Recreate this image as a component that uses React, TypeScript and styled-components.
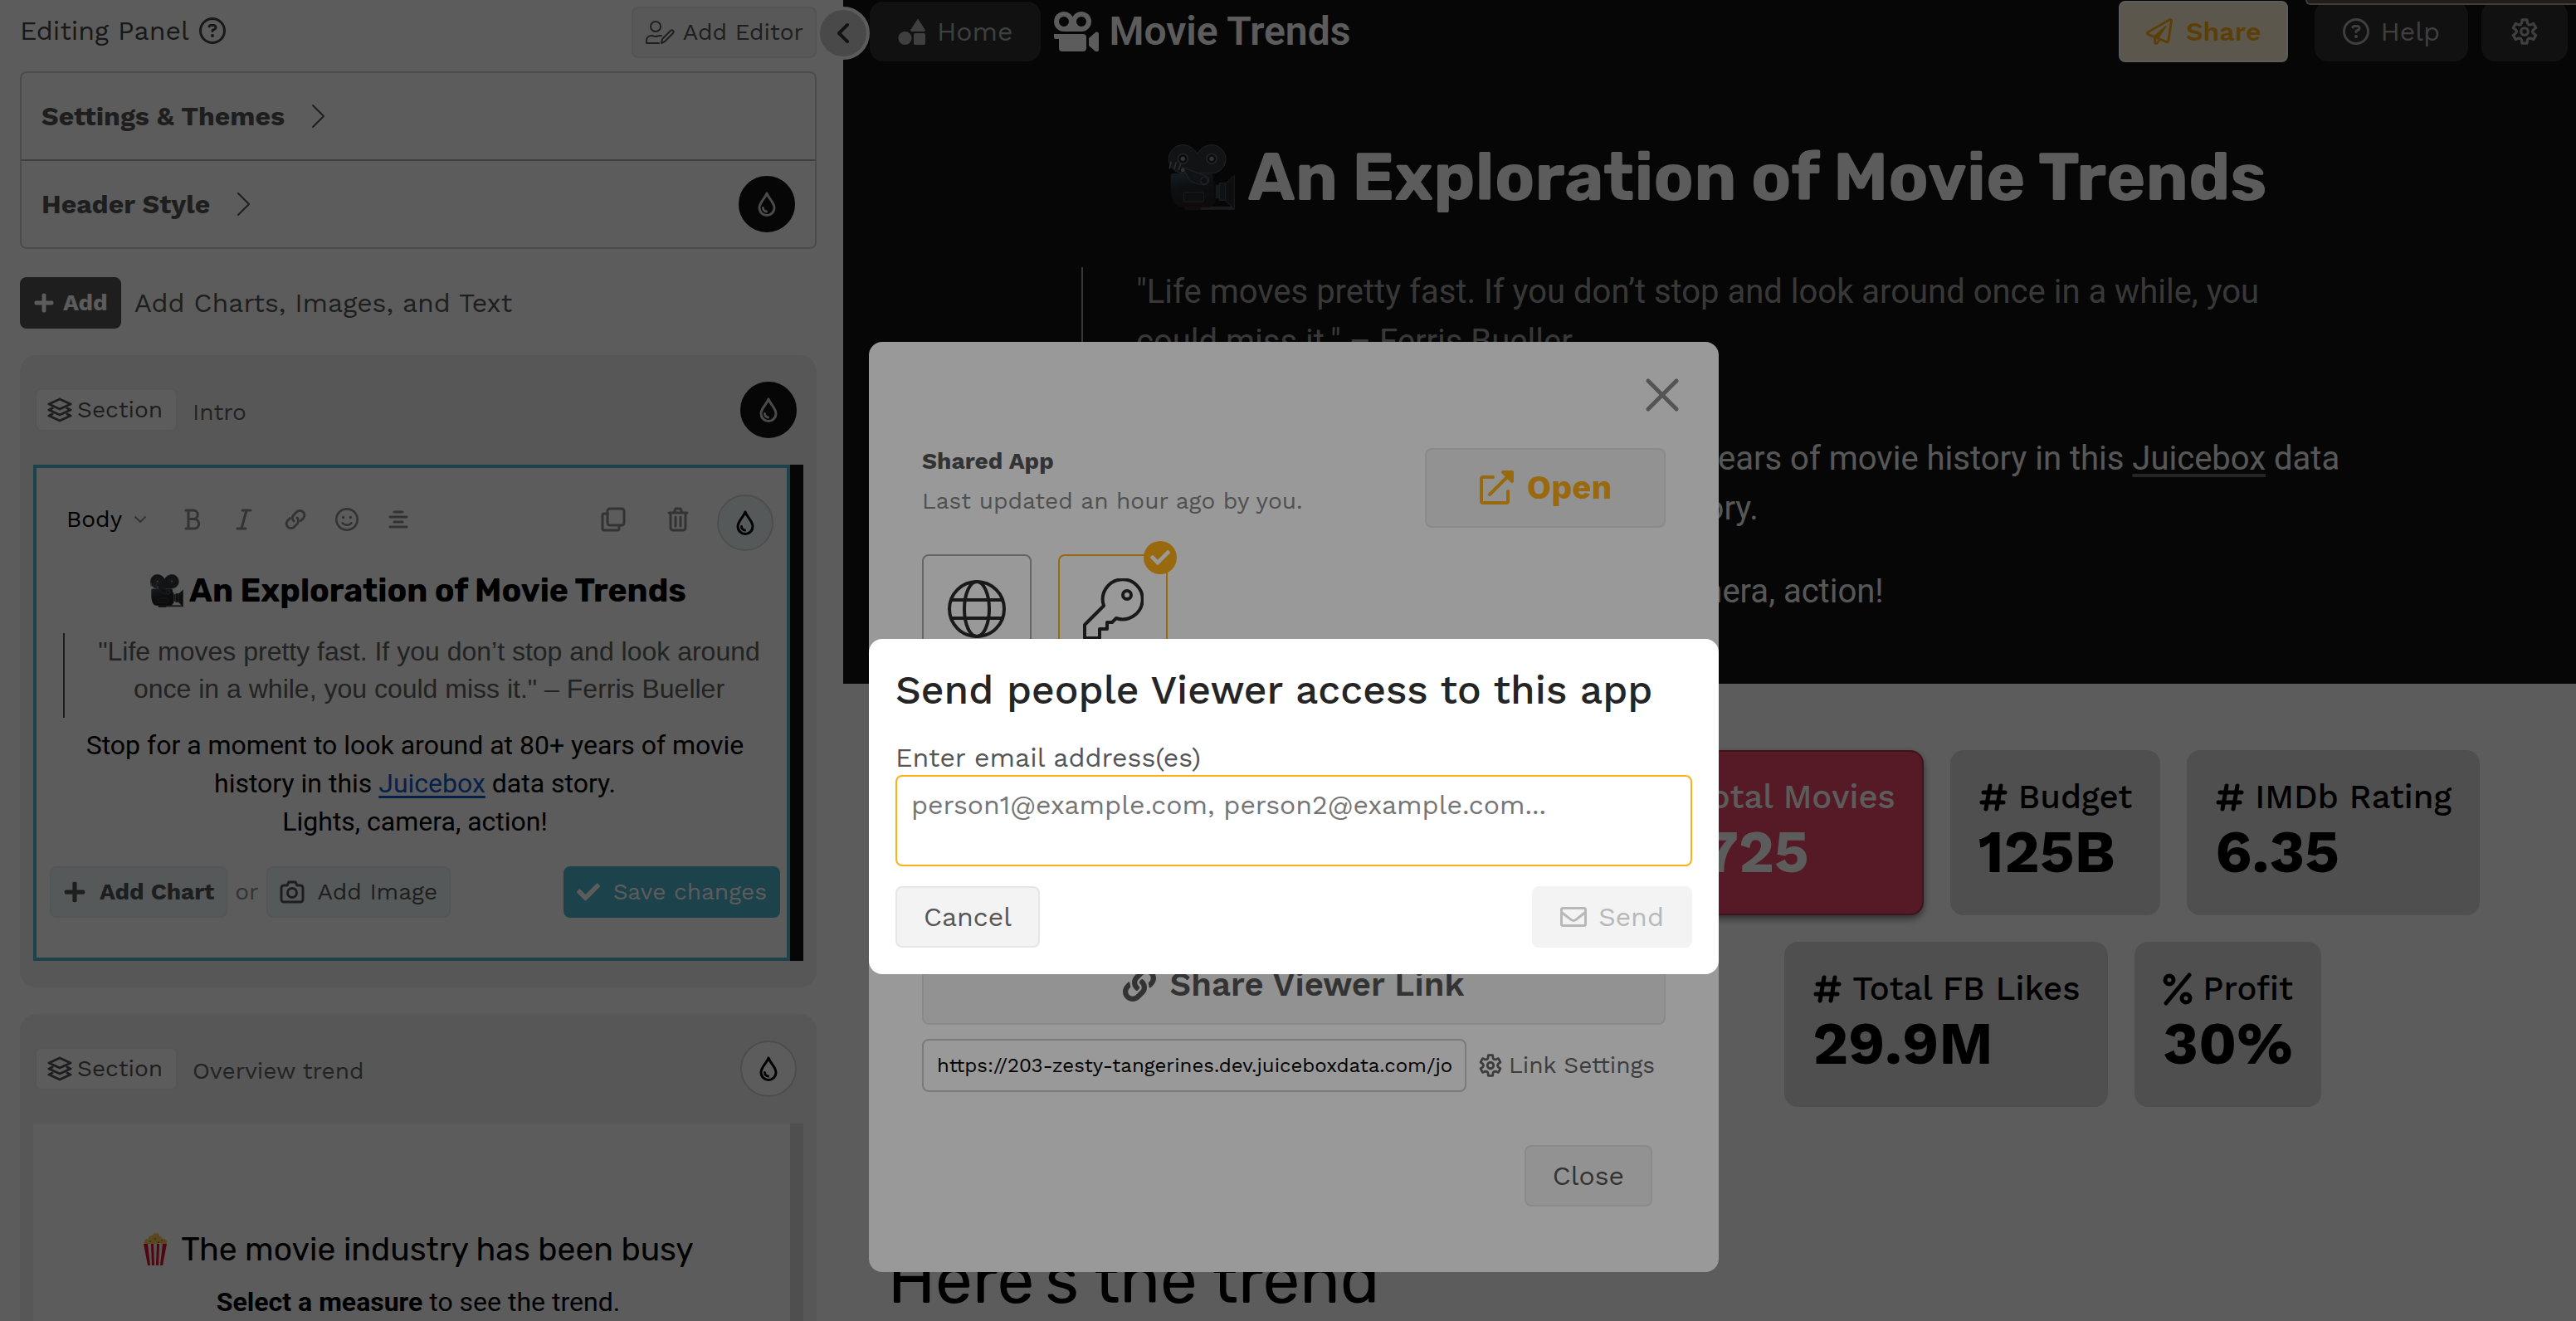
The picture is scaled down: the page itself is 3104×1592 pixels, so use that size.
import React from "react";
import styled, { createGlobalStyle, css } from "styled-components";
import { FaCheck, FaLink, FaPlus, FaRegEnvelope, FaRegPaperPlane } from "react-icons/fa";
import { FaRegCircleQuestion, FaRegFaceSmile } from "react-icons/fa6";

const WORK = '"Work Sans", Inter, sans-serif';
const RUBIK = 'Rubik, Inter, sans-serif';
const ROBOTO = 'Roboto, sans-serif';
const AMBER = "#ffaf17";
const TEAL = "#4eb7d3";

const Global = createGlobalStyle`
  *, *::before, *::after { box-sizing: border-box; }
  body { margin: 0; overflow: hidden; font-family: ${WORK}; font-size: 32px; line-height: 40px; color: #555; background: #fff; }
  h1, h2, h3, p, blockquote { margin: 0; font-weight: inherit; font-size: inherit; }
  button, input, textarea, select { font: inherit; color: inherit; margin: 0; }
  button { cursor: pointer; }
  svg { display: block; flex: none; }
`;

/* ---------- icons ---------- */

type IconProps = { size?: number };
const Line = styled.svg<{ $w?: number }>`
  fill: none; stroke: currentColor; stroke-width: ${(p) => p.$w ?? 2};
  stroke-linecap: round; stroke-linejoin: round;
`;

const Drop = () => (
  <Line width={22} height={30} viewBox="0 0 22 30" $w={3}>
    <path d="M11 2C9 8 2 13 2 19.500a9 9 0 0 0 18 0C20 13 13 8 11 2Z" />
    <path d="M6.500 19.500a4.500 4.500 0 0 0 4 4.500" />
  </Line>
);
const ChevronRight = () => <Line width={18} height={30} viewBox="0 0 18 30" $w={2}><path d="M2 2l13 13L2 28" /></Line>;
const ChevronLeft = () => <Line width={18} height={26} viewBox="0 0 18 26" $w={4}><path d="M14 3L4 13l10 10" /></Line>;
const ChevronDown = () => <Line width={16} height={10} viewBox="0 0 16 10"><path d="M2 2l6 6 6-6" /></Line>;
const UserPen = () => (
  <Line width={36} height={30} viewBox="0 0 36 30" $w={2}>
    <circle cx="13" cy="8" r="6" />
    <path d="M17 28H2v-3c0-4 3-6 6-6 3 0 3 1 5 1s3-1 5-1h2" />
    <path d="M20 28l1-5 10-10c2-2 5 1 3 3L24 26z" />
  </Line>
);
const Layers = () => (
  <Line width={30} height={30} viewBox="0 0 30 30" $w={3}>
    <path d="M15 2l13 6-13 6L2 8z" />
    <path d="M6 13l-4 2 13 6 13-6-4-2" />
    <path d="M6 20l-4 2 13 6 13-6-4-2" />
  </Line>
);
const Bold = () => <Line width={20} height={26} viewBox="0 0 20 26" $w={3}><path d="M2 2h9a5 5 0 0 1 0 10.500H5M2 24h10a5.700 5.700 0 0 0 0-11.500M5 2v22" /></Line>;
const Italic = () => <Line width={20} height={26} viewBox="0 0 20 26" $w={3}><path d="M8 2h10M2 24h10M13 2L7 24" /></Line>;
const Chain = () => (
  <Line width={28} height={28} viewBox="0 0 28 28" $w={3}>
    <path d="M12 16a5.500 5.500 0 0 1 0-7.500l4-4a5.500 5.500 0 0 1 7.700 7.700l-3.200 3.300" />
    <path d="M16 12a5.500 5.500 0 0 1 0 7.500l-4 4a5.500 5.500 0 0 1-7.700-7.700l3.200-3.300" />
  </Line>
);
const AlignMid = () => <Line width={24} height={26} viewBox="0 0 24 26" $w={3}><path d="M7 4h10M2 10h20M7 16h10M2 22h20" /></Line>;
const Copy = () => (
  <Line width={30} height={30} viewBox="0 0 30 30" $w={3}>
    <rect x="8" y="2" width="20" height="20" rx="3" />
    <path d="M8 8H4a2 2 0 0 0-2 2v16a2 2 0 0 0 2 2h16a2 2 0 0 0 2-2v-4" />
  </Line>
);
const Trash = () => (
  <Line width={26} height={30} viewBox="0 0 26 30" $w={3}>
    <path d="M2 7h22M8 7l2-5h6l2 5M4 7v18a3 3 0 0 0 3 3h12a3 3 0 0 0 3-3V7M10 12v11M16 12v11" />
  </Line>
);
const Camera = () => (
  <Line width={30} height={28} viewBox="0 0 30 28" $w={3}>
    <path d="M2 9a3 3 0 0 1 3-3h4l2-4h8l2 4h4a3 3 0 0 1 3 3v14a3 3 0 0 1-3 3H5a3 3 0 0 1-3-3z" />
    <circle cx="15" cy="15" r="5.500" />
  </Line>
);
const Shapes = () => (
  <svg width={34} height={34} viewBox="0 0 34 34" fill="currentColor">
    <path d="M24 1.500l8.500 13a1.500 1.500 0 0 1-1 2.500H16.500a1.500 1.500 0 0 1-1-2.500z" />
    <circle cx="8.500" cy="25" r="8" /><rect x="19" y="19" width="14" height="14" rx="2" />
  </svg>
);
const MovieIcon = () => (
  <svg width={54} height={48} viewBox="0 0 54 48" fill="currentColor">
    <path fillRule="evenodd" d="M12 0c5 0 9 3 10.500 6.500C24 3 28 0 33 0a12 12 0 0 1 0 24H12A12 12 0 0 1 12 0zm0 6a6 6 0 1 0 0 12 6 6 0 0 0 0-12zm21 0a6 6 0 1 0 0 12 6 6 0 0 0 0-12z" />
    <path d="M0 27h35a4 4 0 0 1 4 4v13a4 4 0 0 1-4 4H10a4 4 0 0 1-4-4V33H2a2 2 0 0 1-2-2z" />
    <path d="M42 32l8-7c2-1 4 0 4 2v19c0 2-2 3-4 2l-8-7z" />
  </svg>
);
const Hash = () => <Line width={36} height={36} viewBox="0 0 36 36" $w={5}><path d="M14 4L9 32M27 4l-5 28M6 12h26M4 24h26" /></Line>;
const Percent = () => (
  <Line width={36} height={40} viewBox="0 0 36 40" $w={5}>
    <path d="M32 3L4 37" /><circle cx="8" cy="9" r="5" /><circle cx="28" cy="31" r="5" />
  </Line>
);

/* Outline of a six-toothed cog inside a 30-unit box. */
const gearPath = (() => {
  const tooth = [[-30, 9], [-19, 10], [-12, 13.500], [12, 13.500], [19, 10]];
  const points: string[] = [];
  for (let i = 0; i < 6; i++) {
    tooth.forEach(([deg, r]) => {
      const a = ((i * 60 + deg - 90) * Math.PI) / 180;
      points.push(`${(15 + r * Math.cos(a)).toFixed(2)} ${(15 + r * Math.sin(a)).toFixed(2)}`);
    });
  }
  return `M${points.join("L")}Z`;
})();
const Gear = ({ size = 32 }: IconProps) => (
  <Line width={size} height={size} viewBox="0 0 30 30" $w={3}>
    <path d={gearPath} /><circle cx="15" cy="15" r="4" />
  </Line>
);
const CloseX = () => <Line width={40} height={40} viewBox="0 0 40 40" $w={5}><path d="M3 3l34 34M37 3L3 37" /></Line>;
const External = () => (
  <Line width={42} height={42} viewBox="0 0 42 42" $w={4}>
    <path d="M17 8H5a2 2 0 0 0-2 2v27a2 2 0 0 0 2 2h28a2 2 0 0 0 2-2V25M13 29L36 6" />
    <path d="M29 2h11v11z" fill="currentColor" />
  </Line>
);
const Globe = () => (
  <Line width={72} height={72} viewBox="0 0 72 72" $w={4}>
    <circle cx="36" cy="36" r="33" /><ellipse cx="36" cy="36" rx="15" ry="33" /><path d="M6 25h60M6 47h60" />
  </Line>
);
const Key = () => (
  <Line width={74} height={74} viewBox="0 0 74 74" $w={4}>
    <path d="M26 33A24 24 0 1 1 41 48l-5 5h-6v8h-9v11H3V56z" />
    <circle cx="54" cy="20" r="5" />
  </Line>
);

const CameraEmoji = ({ size = 80 }: IconProps) => (
  <svg width={size} height={size} viewBox="0 0 240 240" role="img" aria-label="movie camera">
    <defs>
      <linearGradient id="body" x1="0" y1="0" x2="0.300" y2="1">
        <stop offset="0" stopColor="#3c4f5e" /><stop offset="0.500" stopColor="#232a30" /><stop offset="1" stopColor="#2a1f1e" />
      </linearGradient>
    </defs>
    <path d="M52 2c24 0 40 14 52 32C116 16 132 2 156 2a51 51 0 0 1 0 102H52A51 51 0 0 1 52 2z" fill="#30363c" stroke="#59636c" strokeWidth="3" />
    <circle cx="52" cy="52" r="18" fill="#20252a" stroke="#626c76" strokeWidth="4" /><circle cx="52" cy="52" r="8" fill="#8a929a" />
    <circle cx="156" cy="52" r="18" fill="#20252a" stroke="#626c76" strokeWidth="4" /><circle cx="156" cy="52" r="8" fill="#8a929a" />
    <path d="M58 224h180v12H62z" fill="#4d4850" />
    <path d="M8 112c0-6 8-7 20-7h124c6 0 10 6 10 12v96c0 8-6 14-14 14H46c-18 0-38-20-38-70z" fill="url(#body)" />
    <path d="M54 226h66l-6 12H62z" fill="#2c2628" />
    <rect x="55" y="174" width="73" height="33" rx="5" fill="#25272a" stroke="#4c5156" strokeWidth="3" />
    <path d="M162 132h8v80h-8z" fill="#1b1e21" /><path d="M170 146h14v50h-14z" fill="#3d4349" />
    <path d="M184 140h22v62h-22z" fill="#2c3238" stroke="#4a525a" strokeWidth="3" />
    <path d="M206 142l32-30v122l-32-30z" fill="#25292d" stroke="#4a4f54" strokeWidth="3" />
    <path d="M48 82l90 34a16 16 0 0 1-8 30c-6 0-60-4-60-30z" fill="#2e343a" stroke="#5a636b" strokeWidth="3" />
    <path d="M4 88l6-26M20 90l8-26M36 92l8-22" stroke="#79838c" strokeWidth="5" />
    <circle cx="52" cy="93" r="7" fill="#8a929a" /><circle cx="129" cy="131" r="13" fill="#272c31" stroke="#5c656d" strokeWidth="4" />
  </svg>
);
const Popcorn = () => (
  <svg width={30} height={40} viewBox="0 0 30 40" role="img" aria-label="popcorn">
    <g fill="#f5c453"><circle cx="6" cy="11" r="4" /><circle cx="11" cy="7" r="4" /><circle cx="16" cy="4" r="4" /><circle cx="20" cy="8" r="4" /><circle cx="25" cy="11" r="4" /><circle cx="15" cy="11" r="5" /></g>
    <g fill="#b9772c"><circle cx="9" cy="10" r="1" /><circle cx="15" cy="7" r="1" /><circle cx="19" cy="11" r="1" /><circle cx="23" cy="9" r="1" /></g>
    <path d="M1 13h28l-5 26H6z" fill="#f4f1f1" />
    <path d="M1 13h5l3 26H6zM10 13h3l1 26h-3zM17 13h3l-1 26h-3zM24 13h5l-5 26h-3z" fill="#e0132b" />
  </svg>
);

/* ---------- shared controls ---------- */

const Button = styled.button<{ $tall?: boolean; $bold?: boolean; $kind?: "plain" | "dark" | "teal" | "tint" }>`
  display: inline-flex; align-items: center; justify-content: center; gap: 10px;
  height: ${(p) => (p.$tall ? 74 : 62)}px; padding: 0 ${(p) => (p.$tall ? 32 : 14)}px;
  font-size: ${(p) => (p.$tall ? 32 : 28)}px; line-height: 40px; font-weight: ${(p) => (p.$bold ? 700 : 400)};
  white-space: nowrap; border-radius: 8px; border: 2px solid #e6e6e6; background: #f3f3f3; color: #555;
  ${(p) => p.$kind === "dark" && css`background: #555; border-color: #555; color: #fff;`}
  ${(p) => p.$kind === "teal" && css`background: ${TEAL}; border-color: ${TEAL}; color: #fff; gap: 16px;`}
  ${(p) => p.$kind === "tint" && css`background: #ecf6f7; border-color: #e6eeee; gap: 16px;`}
  &:disabled { background: #f3f3f3; border-color: #f3f3f3; color: #b8b8b8; gap: 14px; }
`;
const RoundButton = styled.button<{ $tone: "dark" | "light" | "tint" }>`
  display: grid; place-items: center; flex: none; width: 68px; height: 68px; padding: 0; border-radius: 50%;
  ${(p) => p.$tone === "dark" && css`background: #111; border: 2px solid #111; color: #ccc;`}
  ${(p) => p.$tone === "light" && css`background: #fff; border: 2px solid #d3d3d3; color: #000;`}
  ${(p) => p.$tone === "tint" && css`background: #ebf7f9; border: 2px solid #d3d9d9; color: #000;`}
`;

/* ---------- editing panel ---------- */

const Page = styled.div`display: flex; height: 100vh; overflow: hidden;`;
const Panel = styled.aside`position: relative; flex: none; width: 1016px; padding: 8px 32px 0 24px; background: #fff;`;
const PanelHead = styled.header`
  display: flex; align-items: center; justify-content: space-between; height: 62px; margin-bottom: 16px;
`;
const PanelTitle = styled.h2`display: flex; align-items: center; gap: 12px; padding-bottom: 4px; color: #444;`;
const Collapse = styled.button`
  position: absolute; z-index: 1; top: 8px; right: -32px; width: 64px; height: 64px; padding: 0;
  display: grid; place-items: center; border-radius: 50%; border: 4px solid #fff; background: #cbcbcb; color: #333;
`;
const Accordion = styled.div`border: 2px solid #d0d0d0; border-radius: 8px; margin-bottom: 34px;`;
const AccordionRow = styled.div`
  display: flex; align-items: center; justify-content: space-between; height: 104px; padding: 0 24px;
  & + & { border-top: 2px solid #b0b0b0; height: 106px; }
`;
const AccordionToggle = styled.button`
  display: flex; align-items: center; gap: 32px; padding: 0; border: 0; background: none; font-weight: 700;
`;
const AddRow = styled.div`display: flex; align-items: center; gap: 16px; margin-bottom: 32px;`;
const Card = styled.section`padding: 0 16px 32px; margin-bottom: 32px; border-radius: 20px; background: #f0f0f0;`;
const CardHead = styled.header`
  display: flex; align-items: center; gap: 18px; height: 132px; padding: 0 8px 0 2px; font-size: 28px;
`;
const Pill = styled.button`
  display: flex; align-items: center; gap: 6px; height: 52px; padding: 0 16px 0 13px;
  border: 2px solid #ececec; border-radius: 8px; background: #fff;
`;
const CardName = styled.span`flex: 1; padding-top: 6px; color: #616161;`;
const Stage = styled.div<{ $bar: string }>`border-right: 16px solid ${(p) => p.$bar};`;
const Block = styled.div<{ $active?: boolean }>`
  min-height: 300px; padding: ${(p) => (p.$active ? "32px 8px 48px 16px" : "128px 8px 80px 24px")};
  border: ${(p) => (p.$active ? `4px solid ${TEAL}` : "0")}; background: ${(p) => (p.$active ? "#fdfffb" : "#fff")};
  color: #000; font-family: ${ROBOTO}; text-align: center;
`;
const Toolbar = styled.div`
  display: flex; align-items: center; height: 68px; margin-bottom: 24px; padding: 0 8px 0 20px; color: #8c8f8c;
  font-family: ${WORK};
`;
const ToolGroup = styled.div<{ $gap: number }>`display: flex; align-items: center; gap: ${(p) => p.$gap}px; padding: 0 32px 8px 0;`;
const Tool = styled.button`display: grid; place-items: center; width: 30px; height: 30px; padding: 0; border: 0; background: none;`;
const StyleSelect = styled.label`display: flex; align-items: center; gap: 13px; margin-right: 8px;`;
const Select = styled.select`
  appearance: none; border: 0; padding: 0; width: 68px; height: 40px; background: none; font-size: 28px; line-height: 40px; color: #000;
`;
const Fill = styled.span`flex: 1;`;
const BlockTitle = styled.h3<{ $bold?: boolean }>`
  display: flex; align-items: center; justify-content: center; gap: ${(p) => (p.$bold ? 7 : 16)}px;
  padding-left: ${(p) => (p.$bold ? 8 : 0)}px;
  font-family: ${RUBIK}; font-size: 39px; line-height: 48px; font-weight: ${(p) => (p.$bold ? 700 : 400)};
`;
const SmallQuote = styled.blockquote`
  margin: 27px 0 10px 16px; padding: 0 0 12px 16px; border-left: 2px solid #555;
  font-family: "Liberation Sans", Arial, sans-serif; line-height: 45px; color: #606360;
`;
const Body = styled.p<{ $top?: number }>`margin-top: ${(p) => p.$top ?? 0}px; line-height: 46px;`;
const BlueLink = styled.a`color: #0a5bd0; text-decoration-thickness: 3px; text-underline-offset: 4px;`;
const BlockFoot = styled.div`
  display: flex; align-items: center; gap: 9px; margin-top: 31px; font-family: ${WORK}; font-size: 28px; color: #8c8f8c;
`;

/* ---------- app preview ---------- */

const Main = styled.main`flex: 1; min-width: 0; background: #fff;`;
const Dark = styled.div`background: #111; color: #f0f0f0; font-family: ${ROBOTO};`;
const TopBar = styled.header`
  position: relative; display: flex; align-items: center; height: 76px; padding: 0 10px 0 32px; font-family: ${WORK};
`;
const NavButton = styled.button<{ $pad: number }>`
  display: flex; align-items: center; gap: 13px; height: 72px; padding: 0 ${(p) => p.$pad}px;
  border: 0; border-radius: 16px; background: #2f2f2f; color: #b0b0b0;
`;
const AppName = styled.h1`
  display: flex; align-items: center; flex: 1; gap: 12px; margin-left: 16px;
  font-family: ${ROBOTO}; font-size: 48px; line-height: 56px; font-weight: 600; color: #fff;
`;
const ShareButton = styled.button`
  display: flex; align-items: center; gap: 16px; height: 74px; padding: 0 31px; margin-right: 32px;
  border: 2px solid #fff; border-radius: 8px; background: #fff0d4; color: ${AMBER}; font-weight: 600;
`;
const TopActions = styled.div`display: flex; gap: 16px;`;
const Peek = styled.div`
  position: absolute; top: 0; right: 0; width: 326px; height: 6px;
  background: #5e5048; border: solid #b8ab9f; border-width: 0 0 2px 2px; border-bottom-left-radius: 16px;
`;
const HeroWrap = styled.div`padding-left: 20px;`;
const Hero = styled.div`max-width: 1534px; margin: 0 auto; padding: 90px 0 81px; font-size: 40px; line-height: 60px; text-align: center;`;
const HeroTitle = styled.h2`
  display: flex; align-items: center; justify-content: center; gap: 15px; height: 96px; margin-bottom: 60px;
  font-family: ${RUBIK}; font-size: 80px; line-height: 96px; font-weight: 700; color: #fff;
`;
const HeroQuote = styled.blockquote`margin-bottom: 81px; padding: 0 64px; border-left: 2px solid #9b9b9b; color: #9b9b9b; text-align: left;`;
const HeroText = styled.p`& + & { margin-top: 40px; }`;
const HeroLink = styled.a`color: inherit; text-decoration-color: #666; text-decoration-thickness: 4px; text-underline-offset: 5px;`;
const Kpis = styled.div`display: grid; gap: 32px; padding-top: 80px;`;
const KpiRow = styled.div<{ $end: number }>`display: flex; justify-content: flex-end; gap: 32px; padding-right: ${(p) => p.$end}px;`;
const Kpi = styled.article<{ $hot?: boolean }>`
  height: 199px; padding: 28px 32px; border: 2px solid #dbdbdb; border-radius: 16px; background: #dbdbdb; color: #000;
  ${(p) => p.$hot && css`background: #ec486a; border-color: #b03650; color: #fff; box-shadow: 0 4px 8px rgba(0, 0, 0, 0.5);`}
`;
const KpiLabel = styled.h3`display: flex; align-items: center; gap: 12px; font-size: 40px; line-height: 54px; font-weight: 500; white-space: nowrap;`;
const KpiValue = styled.p`font-size: 72px; line-height: 76px; font-weight: 700;`;
const TrendTitle = styled.h2`padding: 161px 0 0 54px; font-family: ${RUBIK}; font-size: 80px; line-height: 96px; color: #000;`;

/* ---------- dialogs ---------- */

const Backdrop = styled.div`
  position: fixed; inset: 0; z-index: 2; display: grid; place-items: center; padding: 352px 0 0 14px; background: rgba(0, 0, 0, 0.4);
`;
const Dialog = styled.div<{ $pad: string }>`width: 1024px; padding: ${(p) => p.$pad}; border-radius: 16px; background: #fff;`;
const CloseRow = styled.div`display: flex; justify-content: flex-end; margin-right: -16px;`;
const IconButton = styled.button`padding: 0; border: 0; background: none; color: #8d8d8d;`;
const SharedRow = styled.div`display: flex; justify-content: space-between; margin: 44px 0 32px; font-size: 28px; line-height: 48px;`;
const SharedText = styled.div`margin-top: -8px;`;
const SharedName = styled.h2`font-weight: 700;`;
const Updated = styled.p`color: #868686;`;
const OpenButton = styled.button`
  display: flex; align-items: center; justify-content: center; gap: 16px; width: 290px; height: 96px;
  border: 2px solid #e6e6e6; border-radius: 8px; background: #f3f3f3; color: ${AMBER}; font-size: 40px; font-weight: 700;
`;
const Options = styled.div`display: flex; gap: 32px; margin-bottom: 339px;`;
const Option = styled.button<{ $on?: boolean }>`
  position: relative; display: grid; place-items: center; width: 132px; height: 132px; padding: 0;
  border: 2px solid ${(p) => (p.$on ? AMBER : "#aaa")}; border-radius: 8px; background: #fff; color: #2a2a2a;
`;
const Tick = styled.span`
  position: absolute; top: -18px; right: -13px; display: grid; place-items: center; width: 40px; height: 40px;
  border-radius: 50%; background: ${AMBER}; color: #fff;
`;
const LinkButton = styled.button`
  display: flex; align-items: center; justify-content: center; gap: 16px; width: 100%; height: 96px;
  border: 2px solid #e6e6e6; border-radius: 8px; background: #f3f3f3; color: #555; font-size: 40px; font-weight: 600;
`;
const UrlRow = styled.div`display: flex; align-items: center; gap: 15px; margin: 17px 0 64px; font-size: 28px;`;
const UrlInput = styled.input`
  width: 656px; height: 64px; padding: 0 16px; border: 2px solid #ccc; border-radius: 8px; background: #fff; font-size: 24px; color: #000;
`;
const PlainButton = styled.button`display: flex; align-items: center; gap: 8px; padding: 0; border: 0; background: none; color: #666;`;
const CloseFoot = styled.div`display: flex; justify-content: flex-end; padding-right: 16px;`;

const SendTitle = styled.h2`font-size: 48px; line-height: 60px; font-weight: 500; color: #252525;`;
const Field = styled.label`display: block; margin-top: 31px; color: #555;`;
const Emails = styled.textarea`
  display: block; width: 100%; height: 110px; margin: 1px 0 24px; padding: 14px 17px; border: 2px solid ${AMBER}; border-radius: 8px;
  background: #fff; line-height: 40px; resize: none; outline: 0;
  &::placeholder { color: #757575; opacity: 1; }
`;
const SendFoot = styled.div`display: flex; justify-content: space-between;`;

const SectionHead = ({ name, tone }: { name: string; tone: "dark" | "light" }) => (
  <CardHead>
    <Pill><Layers />Section</Pill>
    <CardName>{name}</CardName>
    <RoundButton $tone={tone} aria-label={`${name} colours`}><Drop /></RoundButton>
  </CardHead>
);

const Metric = ({ label, value, hot, percent }: { label: string; value: string; hot?: boolean; percent?: boolean }) => (
  <Kpi $hot={hot}>
    <KpiLabel>{percent ? <Percent /> : <Hash />}{label}</KpiLabel>
    <KpiValue>{value}</KpiValue>
  </Kpi>
);

export default function App() {
  return (
    <>
      <Global />
      <Page>
        <Panel>
          <PanelHead>
            <PanelTitle>Editing Panel <FaRegCircleQuestion size={32} /></PanelTitle>
            <Button><UserPen />Add Editor</Button>
          </PanelHead>
          <Collapse aria-label="Collapse panel"><ChevronLeft /></Collapse>
          <Accordion>
            <AccordionRow><AccordionToggle>Settings &amp; Themes <ChevronRight /></AccordionToggle></AccordionRow>
            <AccordionRow>
              <AccordionToggle>Header Style <ChevronRight /></AccordionToggle>
              <RoundButton $tone="dark" aria-label="Header colours"><Drop /></RoundButton>
            </AccordionRow>
          </Accordion>
          <AddRow><Button $kind="dark" $bold><FaPlus size={26} />Add</Button>Add Charts, Images, and Text</AddRow>

          <Card>
            <SectionHead name="Intro" tone="dark" />
            <Stage $bar="#111">
              <Block $active>
                <Toolbar>
                  <ToolGroup $gap={32}>
                    <StyleSelect>
                      <Select aria-label="Text style"><option>Body</option></Select>
                      <ChevronDown />
                    </StyleSelect>
                    <Tool aria-label="Bold"><Bold /></Tool>
                    <Tool aria-label="Italic"><Italic /></Tool>
                    <Tool aria-label="Link"><Chain /></Tool>
                    <Tool aria-label="Emoji"><FaRegFaceSmile size={28} /></Tool>
                    <Tool aria-label="Align"><AlignMid /></Tool>
                  </ToolGroup>
                  <Fill />
                  <ToolGroup $gap={48}>
                    <Tool aria-label="Duplicate"><Copy /></Tool>
                    <Tool aria-label="Delete"><Trash /></Tool>
                  </ToolGroup>
                  <RoundButton $tone="tint" aria-label="Block colours"><Drop /></RoundButton>
                </Toolbar>
                <BlockTitle $bold><CameraEmoji size={40} />An Exploration of Movie Trends</BlockTitle>
                <SmallQuote>"Life moves pretty fast. If you don’t stop and look around once in a while, you could miss it." – Ferris Bueller</SmallQuote>
                <Body>Stop for a moment to look around at 80+ years of movie history in this <BlueLink href="#juicebox">Juicebox</BlueLink> data story.</Body>
                <Body>Lights, camera, action!</Body>
                <BlockFoot>
                  <Button $kind="tint" $bold><FaPlus size={28} />Add Chart</Button>
                  or
                  <Button $kind="tint"><Camera />Add Image</Button>
                  <Fill />
                  <Button $kind="teal"><FaCheck size={28} />Save changes</Button>
                </BlockFoot>
              </Block>
            </Stage>
          </Card>

          <Card>
            <SectionHead name="Overview trend" tone="light" />
            <Stage $bar="#dbdbdb">
              <Block>
                <BlockTitle><Popcorn />The movie industry has been busy</BlockTitle>
                <Body $top={16}><b>Select a measure</b> to see the trend.</Body>
              </Block>
            </Stage>
          </Card>
        </Panel>

        <Main>
          <Dark>
            <TopBar>
              <NavButton $pad={34}><Shapes />Home</NavButton>
              <AppName><MovieIcon />Movie Trends</AppName>
              <ShareButton><FaRegPaperPlane size={32} />Share</ShareButton>
              <TopActions>
                <NavButton $pad={34}><FaRegCircleQuestion size={32} />Help</NavButton>
                <NavButton $pad={36} aria-label="Settings"><Gear /></NavButton>
              </TopActions>
              <Peek />
            </TopBar>
            <HeroWrap>
              <Hero>
                <HeroTitle><CameraEmoji />An Exploration of Movie Trends</HeroTitle>
                <HeroQuote>"Life moves pretty fast. If you don’t stop and look around once in a while, you could miss it." – Ferris Bueller</HeroQuote>
                <HeroText>Stop for a moment to look around at 80+ years of movie history in this <HeroLink href="#juicebox">Juicebox</HeroLink> data story.</HeroText>
                <HeroText>Lights, camera, action!</HeroText>
              </Hero>
            </HeroWrap>
          </Dark>
          <Kpis>
            <KpiRow $end={116}>
              <Metric label="Total Movies" value="4,725" hot />
              <Metric label="Budget" value="125B" />
              <Metric label="IMDb Rating" value="6.35" />
            </KpiRow>
            <KpiRow $end={307}>
              <Metric label="Total FB Likes" value="29.9M" />
              <Metric label="Profit" value="30%" percent />
            </KpiRow>
          </Kpis>
          <TrendTitle>Here’s the trend</TrendTitle>
        </Main>
      </Page>

      <Backdrop>
        <Dialog $pad="44px 64px 79px" role="dialog" aria-label="Shared App">
          <CloseRow><IconButton aria-label="Dismiss"><CloseX /></IconButton></CloseRow>
          <SharedRow>
            <SharedText>
              <SharedName>Shared App</SharedName>
              <Updated>Last updated an hour ago by you.</Updated>
            </SharedText>
            <OpenButton><External />Open</OpenButton>
          </SharedRow>
          <Options>
            <Option aria-label="Public"><Globe /></Option>
            <Option $on aria-label="Private"><Key /><Tick><FaCheck size={24} /></Tick></Option>
          </Options>
          <LinkButton><FaLink size={40} />Share Viewer Link</LinkButton>
          <UrlRow>
            <UrlInput aria-label="Viewer link" readOnly value="https://203-zesty-tangerines.dev.juiceboxdata.com/jo" />
            <PlainButton><Gear size={28} />Link Settings</PlainButton>
          </UrlRow>
          <CloseFoot><Button $tall>Close</Button></CloseFoot>
        </Dialog>
      </Backdrop>

      <Backdrop>
        <Dialog $pad="32px" role="dialog" aria-label="Send people Viewer access to this app">
          <SendTitle>Send people Viewer access to this app</SendTitle>
          <Field htmlFor="emails">Enter email address(es)</Field>
          <Emails id="emails" placeholder="person1@example.com, person2@example.com..." />
          <SendFoot>
            <Button $tall>Cancel</Button>
            <Button $tall disabled><FaRegEnvelope size={32} />Send</Button>
          </SendFoot>
        </Dialog>
      </Backdrop>
    </>
  );
}
